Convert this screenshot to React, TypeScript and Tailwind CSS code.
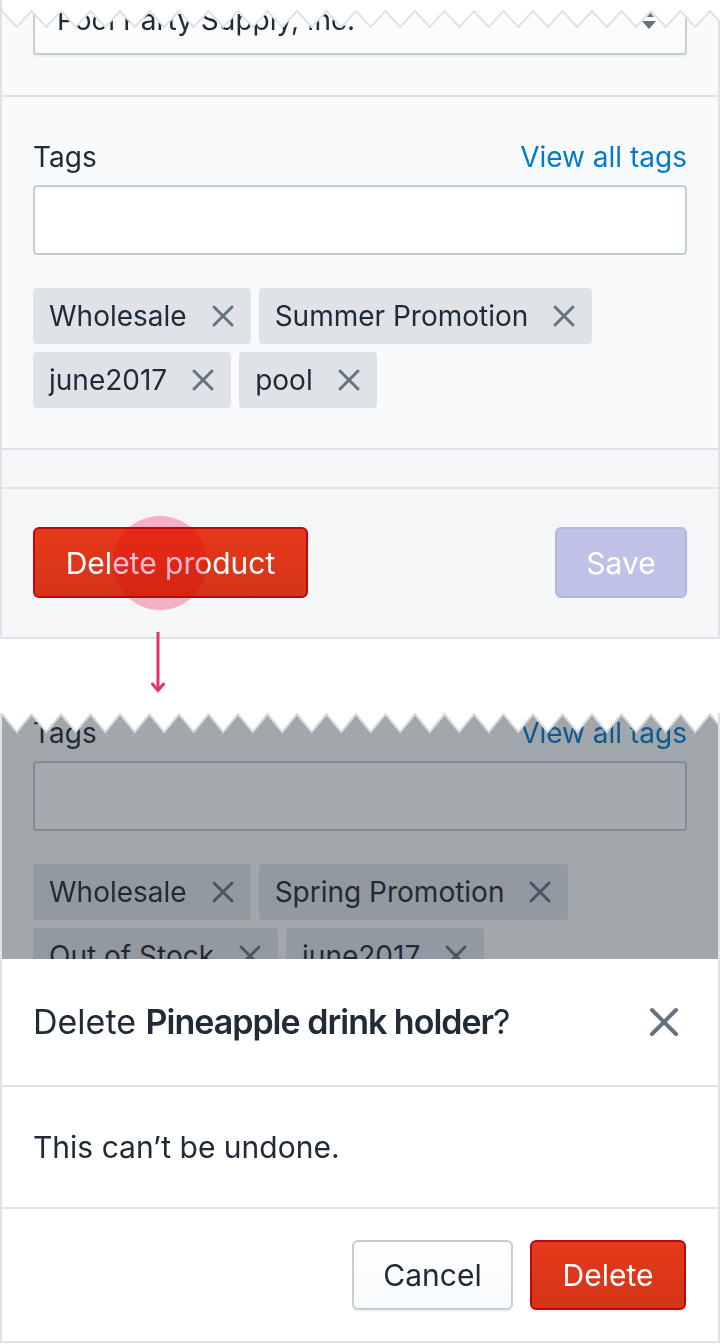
import React from 'react';

// ===========================================
// Torn paper edge (zig-zag cut)
// ===========================================

function ZigZag({ peak, valley, stroke }: { peak: number; valley: number; stroke: string }) {
  const period = 29.5;
  const pts: string[] = [];
  for (let i = 0; (i * period) / 2 <= 720 + period; i++) {
    const x = (i * period) / 2;
    pts.push(`${x},${i % 2 === 0 ? peak : valley}`);
  }
  const line = pts.join(' ');
  return (
    <svg
      className="absolute left-0 top-0 z-20 pointer-events-none"
      width={720}
      height={valley + 3}
      viewBox={`0 0 720 ${valley + 3}`}
    >
      <polygon points={`0,0 ${line} 740,0`} fill="#ffffff" />
      <polyline points={line} fill="none" stroke={stroke} strokeWidth={2} />
    </svg>
  );
}

function XIcon({ size = 24, className = '' }: { size?: number; className?: string }) {
  return (
    <svg width={size} height={size} viewBox="0 0 24 24" className={className}>
      <path d="M3 3 L21 21 M21 3 L3 21" stroke="currentColor" strokeWidth={3} strokeLinecap="round" fill="none" />
    </svg>
  );
}

function Tag({ label }: { label: string }) {
  return (
    <div className="flex items-center gap-6 h-[56px] pl-4 pr-4 rounded-[4px] bg-[#dfe3e8]">
      <span className="text-[#212b36]">{label}</span>
      <XIcon size={24} className="text-[#637381]" />
    </div>
  );
}

function TagsField({ tags }: { tags: string[] }) {
  return (
    <div>
      <div className="flex items-center justify-between h-[40px]">
        <span className="text-[#212b36]">Tags</span>
        <span className="text-[#007ace]">View all tags</span>
      </div>
      <div className="mt-2 h-[70px] rounded-[4px] border-2 border-[#c4cdd5] bg-white shadow-[inset_0_2px_0_0_rgba(99,115,129,0.05)]" />
      <div className="mt-[33px] flex flex-wrap gap-2">
        {tags.map((t) => (
          <Tag key={t} label={t} />
        ))}
      </div>
    </div>
  );
}

export default function App() {
  return (
    <div className="relative w-[720px] h-[1344px] overflow-hidden bg-white font-[Inter,sans-serif] text-[28px] leading-[40px]">
      {/* Product form (before) */}
      <div className="relative flow-root border-x-2 border-b-2 border-[#dfe3e8] bg-[#f9fafb]">
        <ZigZag peak={11} valley={27} stroke="#dfe3e8" />

        <div className="px-[31px] pb-10 border-b-2 border-[#dfe3e8]">
          <div className="-mt-[15px] h-[70px] flex items-center justify-between pl-[22px] pr-[28px] rounded-[4px] border-2 border-[#c4cdd5] bg-linear-to-b from-white to-[#f9fafb] shadow-[0_2px_0_0_rgba(22,29,37,0.05)]">
            <span className="text-[#212b36]">Pool Party Supply, Inc.</span>
            <svg width="16" height="22" viewBox="0 0 16 22">
              <path d="M3 8 L8 2 L13 8 Z" fill="#637381" />
              <path d="M1 12 L15 12 L8 20 Z" fill="#637381" />
            </svg>
          </div>
        </div>

        <div className="px-[31px] pt-10 pb-10 border-b-2 border-[#dfe3e8]">
          <TagsField tags={['Wholesale', 'Summer Promotion', 'june2017', 'pool']} />
        </div>

        <div className="h-[39px] bg-[#f4f6f8] border-b-2 border-[#dfe3e8]" />

        <div className="relative bg-[#f4f6f8] px-[31px] pt-[38px] pb-[39px] flex items-center justify-between text-[30px]">
          <button className="w-[275px] h-[71px] rounded-[6px] border-2 border-[#bf0711] bg-linear-to-b from-[#e6391a] to-[#d53417] text-white">
            Delete product
          </button>
          <button className="w-[132px] h-[71px] rounded-[6px] border-2 border-[#b3b7de] bg-[#bfc2e6] text-white">
            Save
          </button>
          {/* tap indicator */}
          <div className="absolute left-[111px] top-[27px] w-[94px] h-[94px] rounded-full bg-[#ffb6cf] mix-blend-multiply" />
        </div>
      </div>

      {/* arrow */}
      <svg className="absolute left-[150px] top-[630px] z-10" width="16" height="64" viewBox="0 0 16 64">
        <path d="M8 2 V60" stroke="#e5316c" strokeWidth={3} fill="none" />
        <path d="M2.5 54 L8 60.5 L13.5 54" stroke="#e5316c" strokeWidth={3} fill="none" strokeLinecap="round" />
      </svg>

      <div className="h-[74px]" />

      {/* Product form (dimmed, after) */}
      <div className="relative h-[246px] overflow-hidden border-x-2 border-[#dfe3e8] bg-[#f9fafb]">
        <ZigZag peak={1} valley={19} stroke="#d9dcdf" />
        <div className="px-[31px]">
          <TagsField tags={['Wholesale', 'Spring Promotion', 'Out of Stock', 'june2017']} />
        </div>
        <div className="absolute inset-0 bg-[#212b36]/40" />
      </div>

      {/* Confirmation sheet */}
      <div className="border-x-2 border-b-2 border-[#dfe3e8] bg-white text-[#212b36] text-[30px]">
        <div className="h-[128px] border-b-2 border-[#dfe3e8] flex items-center justify-between pl-[31px] pr-[38px] text-[34px]">
          <span>
            Delete <span className="font-semibold tracking-[-1px]">Pineapple drink holder</span>?
          </span>
          <XIcon size={32} className="text-[#637381]" />
        </div>
        <div className="h-[122px] border-b-2 border-[#dfe3e8] flex items-center pl-[31px]">
          This can’t be undone.
        </div>
        <div className="h-[132px] flex items-center justify-end gap-[17px] pr-[32px]">
          <button className="w-[161px] h-[70px] rounded-[6px] border-2 border-[#c4cdd5] bg-linear-to-b from-white to-[#f9fafb] shadow-[0_2px_0_0_rgba(22,29,37,0.05)] text-[#212b36]">
            Cancel
          </button>
          <button className="w-[156px] h-[70px] rounded-[6px] border-2 border-[#bf0711] bg-linear-to-b from-[#e6391a] to-[#d53417] text-white shadow-[0_2px_0_0_rgba(22,29,37,0.05)]">
            Delete
          </button>
        </div>
      </div>
    </div>
  );
}
